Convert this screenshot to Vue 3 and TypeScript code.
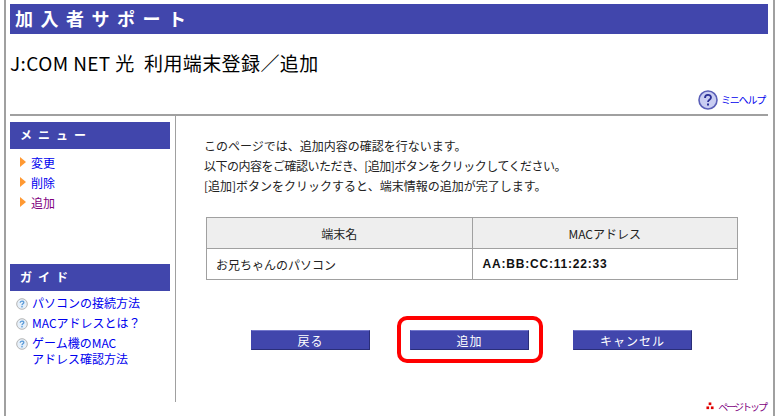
<script setup lang="ts">
const menuLinks = [
  { label: '変更', visited: false },
  { label: '削除', visited: false },
  { label: '追加', visited: true }
]

const guideLinks = [
  ['パソコンの接続方法'],
  ['MACアドレスとは？'],
  ['ゲーム機のMAC', 'アドレス確認方法']
]

const intro = [
  { text: 'このページでは、追加内容の確認を行ないます。', tight: false },
  { text: '以下の内容をご確認いただき、[追加]ボタンをクリックしてください。', tight: true },
  { text: '[追加]ボタンをクリックすると、端末情報の追加が完了します。', tight: false }
]
</script>

<template>
  <div class="page">
    <div class="banner">加入者サポート</div>
    <h1 class="title">J:COM NET 光&nbsp;&nbsp;利用端末登録／追加</h1>
    <div class="help-row">
      <svg class="help-icon" width="20" height="20" viewBox="0 0 20 20">
        <circle cx="10" cy="10" r="9" fill="#c9cdf2" stroke="#5a5fb8" stroke-width="1.6" />
        <path d="M7 8c0-4 6-4 6-.5 0 2.300-3 2.300-3 4.500" fill="none" stroke="#2a2f96" stroke-width="1.800" />
        <rect x="9" y="13.500" width="2" height="2" fill="#2a2f96" />
      </svg>
      <a class="help-link">ミニヘルプ</a>
    </div>
    <div class="body">
      <aside class="side">
        <div class="side-head">メニュー</div>
        <ul class="menu">
          <li v-for="item in menuLinks" :key="item.label">
            <span class="arrow"></span>
            <a :class="{ visited: item.visited }">{{ item.label }}</a>
          </li>
        </ul>
        <div class="side-head guide-head">ガイド</div>
        <ul class="guide">
          <li v-for="lines in guideLinks" :key="lines[0]">
            <svg class="q-icon" width="12" height="12" viewBox="0 0 12 12">
              <circle cx="6" cy="6" r="5.300" fill="#e6f0fa" stroke="#b5b5b5" stroke-width="1" />
              <path d="M4.200 4.800c0-2.300 3.600-2.300 3.600-.3 0 1.300-1.800 1.300-1.800 2.700" fill="none" stroke="#5b9bd8" stroke-width="1.300" />
              <rect x="5.300" y="8" width="1.400" height="1.400" fill="#5b9bd8" />
            </svg>
            <a>
              <template v-for="line in lines" :key="line">{{ line }}<br /></template>
            </a>
          </li>
        </ul>
      </aside>
      <main class="content">
        <p v-for="line in intro" :key="line.text" class="intro" :class="{ tight: line.tight }">{{ line.text }}</p>
        <table class="info">
          <tbody>
            <tr>
              <th>端末名</th>
              <th>MACアドレス</th>
            </tr>
            <tr>
              <td>お兄ちゃんのパソコン</td>
              <td class="mac">AA:BB:CC:11:22:33</td>
            </tr>
          </tbody>
        </table>
        <div class="actions">
          <button class="btn">戻る</button>
          <div class="marked"><button class="btn">追加</button></div>
          <button class="btn">キャンセル</button>
        </div>
      </main>
    </div>
    <div class="page-top">
      <svg width="8" height="8" viewBox="0 0 9 9">
        <rect x="3" y="0.500" width="3" height="3" fill="#e00000" />
        <rect x="0.500" y="5" width="3" height="3" fill="#e00000" />
        <rect x="5.500" y="5" width="3" height="3" fill="#e00000" />
      </svg>
      <a class="visited">ページトップ</a>
    </div>
  </div>
</template>

<style>
html,
body {
  margin: 0;
  background: #fff;
}
</style>

<style scoped>
.page {
  box-sizing: border-box;
  width: 771px;
  height: 416px;
  margin-left: 4px;
  padding: 4px 5px 0 4px;
  border-left: 2px solid #a0a0a0;
  border-right: 2px solid #a0a0a0;
  overflow: hidden;
  font-family: "Noto Sans CJK JP", "Liberation Sans", sans-serif;
  font-size: 12px;
  color: #222;
}

.banner {
  height: 30px;
  padding-left: 5px;
  background: #4146ac;
  color: #fff;
  font-size: 18px;
  font-weight: 700;
  line-height: 29px;
  letter-spacing: 7.500px;
}

.title {
  height: 50px;
  margin: 0;
  font-size: 19px;
  font-weight: 400;
  line-height: 57px;
  letter-spacing: 0.400px;
  color: #000;
}

.help-row {
  display: flex;
  justify-content: flex-end;
  align-items: center;
  gap: 3px;
  height: 32px;
  padding-right: 3px;
  border-bottom: 2px solid #a0a0a0;
  box-sizing: border-box;
}

.help-icon {
  margin-top: 1px;
}

.help-link {
  font-size: 10px;
  letter-spacing: -1.200px;
  color: #0000ee;
}

.body {
  display: flex;
  height: 286px;
}

.side {
  box-sizing: border-box;
  width: 166px;
  padding-top: 6px;
  border-right: 1px solid #a0a0a0;
}

.side-head {
  width: 160px;
  height: 27px;
  padding-left: 10px;
  box-sizing: border-box;
  background: #4146ac;
  color: #fff;
  font-size: 12px;
  font-weight: 700;
  line-height: 26px;
  letter-spacing: 6px;
}

.guide-head {
  margin-top: 52px;
}

ul {
  margin: 0;
  padding: 0;
  list-style: none;
}

.menu {
  padding: 3px 0 0 10px;
}

.menu li {
  display: flex;
  align-items: center;
  gap: 5px;
  height: 20px;
}

.arrow {
  width: 0;
  height: 0;
  border-left: 6px solid #ff9933;
  border-top: 5px solid transparent;
  border-bottom: 5px solid transparent;
}

a {
  color: #0000ee;
}

a.visited {
  color: #800080;
}

.guide {
  padding: 4px 0 0 6px;
}

.guide li {
  display: flex;
  align-items: flex-start;
  gap: 4px;
  margin-bottom: 4px;
  line-height: 16px;
}

.q-icon {
  margin-top: 3px;
  flex: none;
}

.content {
  flex: 1;
  padding: 20px 0 0 30px;
}

.intro {
  margin: 0 0 0 -2px;
  line-height: 20px;
  color: #222;
}

.intro.tight {
  letter-spacing: -0.500px;
}

.info {
  width: 532px;
  height: 63px;
  margin-top: 21px;
  border-collapse: collapse;
  table-layout: fixed;
  font-size: 12px;
}

.info th,
.info td {
  border: 1px solid #a0a0a0;
  padding: 0 9px;
  font-weight: 400;
}

.info th {
  background: #eeeeee;
  text-align: center;
  height: 30px;
}

.info td.mac {
  padding-left: 10px;
  font-family: "Liberation Sans", sans-serif;
  font-weight: 700;
  color: #111;
  letter-spacing: 0.800px;
}

.actions {
  display: flex;
  gap: 40px;
  align-items: center;
  margin: 50px 0 0 45px;
}

.actions .marked + .btn {
  margin-left: 4px;
}

.marked {
  position: relative;
  display: flex;
}

.marked::after {
  content: "";
  position: absolute;
  left: -13px;
  top: -14px;
  width: 138px;
  height: 39px;
  border: 4px solid #ff0000;
  border-radius: 10px;
}

.btn {
  box-sizing: border-box;
  width: 119px;
  height: 20px;
  padding: 0;
  border: 1px solid;
  border-color: #7478cc #2a2e78 #2a2e78 #4146ac;
  background: #4146ac;
  color: #fff;
  font-family: inherit;
  font-size: 12px;
  line-height: 17px;
  letter-spacing: 1px;
}

.page-top {
  display: flex;
  justify-content: flex-end;
  align-items: center;
  gap: 4px;
  height: 8px;
  padding-right: 2px;
  font-size: 10px;
  letter-spacing: -2px;
}
</style>
